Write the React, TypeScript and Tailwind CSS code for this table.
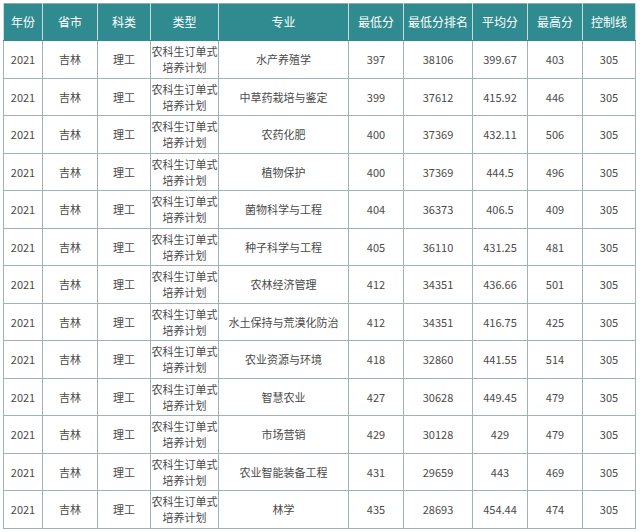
const rows: [string, string, string, string, string][] = [
  ["水产养殖学", "397", "38106", "399.67", "403"],
  ["中草药栽培与鉴定", "399", "37612", "415.92", "446"],
  ["农药化肥", "400", "37369", "432.11", "506"],
  ["植物保护", "400", "37369", "444.5", "496"],
  ["菌物科学与工程", "404", "36373", "406.5", "409"],
  ["种子科学与工程", "405", "36110", "431.25", "481"],
  ["农林经济管理", "412", "34351", "436.66", "501"],
  ["水土保持与荒漠化防治", "412", "34351", "416.75", "425"],
  ["农业资源与环境", "418", "32860", "441.55", "514"],
  ["智慧农业", "427", "30628", "449.45", "479"],
  ["市场营销", "429", "30128", "429", "479"],
  ["农业智能装备工程", "431", "29659", "443", "469"],
  ["林学", "435", "28693", "454.44", "474"],
];

const headers = ["年份", "省市", "科类", "类型", "专业", "最低分", "最低分排名", "平均分", "最高分", "控制线"];
const widths = [39, 55, 53, 68, 130, 55, 69, 55, 55, 53];

export default function App() {
  return (
    <div
      className="w-[640px] h-[532px] bg-white pt-[3px] pl-[3px]"
      style={{ fontFamily: '"Noto Sans CJK SC", "Noto Sans", sans-serif' }}
    >
      <table className="table-fixed border-collapse border border-[#8fabad] w-[632px]">
        <colgroup>
          {widths.map((w, i) => (
            <col key={i} style={{ width: w }} />
          ))}
        </colgroup>
        <thead>
          <tr className="h-[37px] bg-[#2f8b90]">
            {headers.map((h) => (
              <th
                key={h}
                className="border-x border-[#c9dcdc] border-b border-b-[#2f8b90] text-white text-[12px] font-normal text-center p-0"
              >
                {h}
              </th>
            ))}
          </tr>
        </thead>
        <tbody>
          {rows.map((r, i) => (
            <tr key={i} className="h-[37.5px] text-[11px] text-[#4a4a4a] text-center">
              <td className="border border-[#9db3b5] p-0">2021</td>
              <td className="border border-[#9db3b5] p-0">吉林</td>
              <td className="border border-[#9db3b5] p-0">理工</td>
              <td className="border border-[#9db3b5] p-0 leading-[16px]">
                农科生订单式
                <br />
                培养计划
              </td>
              <td className="border border-[#9db3b5] p-0">{r[0]}</td>
              <td className="border border-[#9db3b5] p-0">{r[1]}</td>
              <td className="border border-[#9db3b5] p-0">{r[2]}</td>
              <td className="border border-[#9db3b5] p-0">{r[3]}</td>
              <td className="border border-[#9db3b5] p-0">{r[4]}</td>
              <td className="border border-[#9db3b5] p-0">305</td>
            </tr>
          ))}
        </tbody>
      </table>
    </div>
  );
}
